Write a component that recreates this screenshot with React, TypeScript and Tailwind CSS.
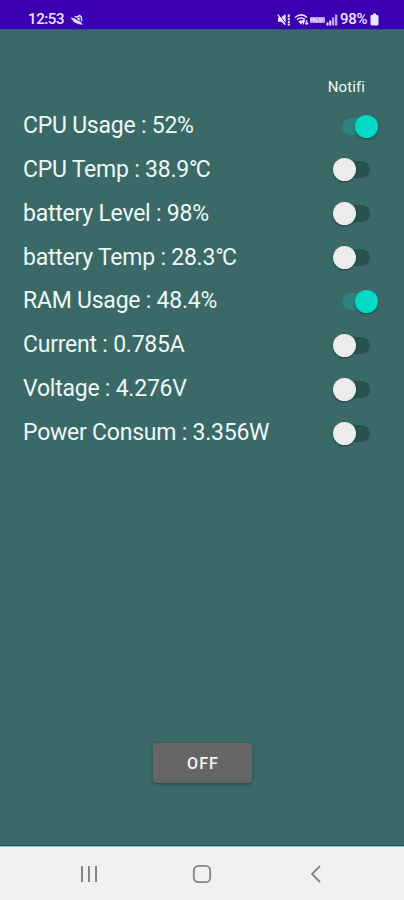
type Metric = { label: string; unit?: string; on?: boolean };

const metrics: Metric[] = [
  { label: "CPU Usage : 52%", on: true },
  { label: "CPU Temp : 38.9", unit: "C" },
  { label: "battery Level : 98%" },
  { label: "battery Temp : 28.3", unit: "C" },
  { label: "RAM Usage : 48.4%", on: true },
  { label: "Current : 0.785A" },
  { label: "Voltage : 4.276V" },
  { label: "Power Consum : 3.356W" },
];

function Switch({ on }: { on?: boolean }) {
  return (
    <span role="switch" aria-checked={!!on} className="flex h-[23px] w-[45px] items-center">
      <span
        className={`ml-[9px] flex h-[17px] w-7 shrink-0 items-center rounded-full ${
          on ? "bg-[#29847b]" : "bg-[#28514f]"
        }`}
      >
        <span
          className={`size-[23px] shrink-0 rounded-full shadow-[0_1px_2px_rgba(0,40,40,0.5)] ${
            on ? "ml-[13.4px] bg-[#03dac5]" : "-ml-[8.6px] bg-[#ececec]"
          }`}
        />
      </span>
    </span>
  );
}

function StatusBar() {
  return (
    <header className="flex h-[30px] items-start justify-between border-b border-[#315580] bg-[#3a00b2] pt-[11px] pr-[25px] pl-7 text-[#ece6ff]">
      <div className="flex items-center">
        <span className="w-[37px] text-[15px] font-medium leading-[17px] tracking-[-0.4px]">12:53</span>
        <svg className="ml-[5px] h-[13px] w-[14px]" viewBox="0 0 14 13" fill="none" stroke="currentColor">
          <path d="M1.2 5 4 8.8 8 10.6l4.2.8-1.6-2.4-3.6-1.6-3-2z" fill="currentColor" strokeWidth=".6" />
          <path d="M4.6 3.6 7 4l2.6-1.6 1.6 1.4.6 4.4" strokeWidth="1.3" />
          <path d="M9 4.2v2.6M7 5.4l3.2 1.6" strokeWidth="1.1" />
        </svg>
      </div>
      <div className="flex items-center">
        <svg className="h-[14px] w-[63px]" viewBox="0 0 63 14" fill="none" stroke="currentColor">
          <path d="M1 4.6h3L8.6 1v11L4 8.8H1z" fill="currentColor" stroke="none" />
          <path d="M1.8 1.2 9 11" stroke="#3a00b2" strokeWidth="1" />
          <path d="M.8 1.6 8 11.5" strokeWidth="1.3" />
          <path d="M11.8 1.5v11" strokeWidth="2" strokeDasharray="2.6 .6" />
          <path d="M18 4.5c4-3.3 8.5-3.3 12 0M20 6.6c2.7-2.2 5.3-2.2 8 0M22 8.8c1.4-1.1 2.8-1.1 4 0" strokeWidth="1.5" />
          <path d="m22 9 2 2.8L26 9z" fill="currentColor" stroke="none" />
          <path d="M26.5 11.5V7.8M25 9l1.5-1.6L28 9M29.7 7v4M28.2 9.8l1.5 1.6 1.5-1.6" strokeWidth="1.1" />
          <rect x="33" y="4" width="15" height="6" rx="1" fill="#b7a3ea" stroke="none" />
          <path d="M34 8.5v-3l1.5 1.5L37 5.5v3M39 5.5v3h2M43 5.5v3M45 5.5v3" stroke="#f1ebff" strokeWidth=".9" />
          <path d="M50.5 9.5v3M53.3 7.5v5" strokeWidth="2" />
          <path d="M56.2 4.5v8M59.2 1.5v11" strokeWidth="2.3" stroke="#b9a4ee" />
        </svg>
        <span className="w-[30px] text-[15px] font-medium leading-[17px] tracking-[-0.3px]">98%</span>
        <svg className="h-[13px] w-[9px]" viewBox="0 0 9 13" fill="currentColor">
          <path d="M3 .5h3V2h1.2Q8.5 2 8.5 3.3v7.8q0 1.4-1.3 1.4H1.8Q.5 12.5.5 11.1V3.3Q.5 2 1.8 2H3z" />
        </svg>
      </div>
    </header>
  );
}

export default function App() {
  return (
    <div className="flex h-[900px] w-[404px] flex-col overflow-hidden bg-[#3a6967] font-['Roboto','Noto_Sans_CJK_JP',sans-serif]">
      <StatusBar />
      <main className="flex flex-1 flex-col pt-[47px] text-[#edf8f7]">
        <div className="mr-[39px] self-end text-[15px] leading-5 tracking-[0.1px]">Notifi</div>
        <ul className="mt-[7.2px]">
          {metrics.map((m) => (
            <li key={m.label} className="flex h-[43.85px] items-center justify-between pr-[26px] pl-[23px]">
              <span className="whitespace-pre text-[23px] leading-7 tracking-[-0.23px]">
                {m.label}
                {m.unit && <span className="tracking-[-1.8px]">°{m.unit}</span>}
              </span>
              <Switch on={m.on} />
            </li>
          ))}
        </ul>
        <button className="mt-auto mb-[63px] h-10 w-[99px] self-center rounded-[3px] bg-[#666666] pt-[2px] pl-[2px] text-[16px] font-medium tracking-[1.1px] text-[#f5f5f5] shadow-[0_1px_3px_rgba(0,0,0,0.35)]">
          OFF
        </button>
      </main>
      <nav className="flex h-[54px] items-center justify-between border-t border-[#9ec4c5] bg-[#f1f1f1] pr-[82px] pl-[80px] text-[#858585] shadow-[0_-1px_0_#164e52]">
        <svg className="h-[18px] w-[18px]" viewBox="0 0 18 18" stroke="currentColor" strokeWidth="2">
          <path d="M2 1v16M9 1v16M16 1v16" />
        </svg>
        <svg className="-ml-[4px] h-[20px] w-[20px]" viewBox="0 0 20 20" fill="none" stroke="currentColor" strokeWidth="1.8">
          <rect x="1.8" y="1.8" width="16.4" height="16.4" rx="4.8" />
        </svg>
        <svg className="h-[18px] w-[12px]" viewBox="0 0 12 18" fill="none" stroke="currentColor" strokeWidth="1.8">
          <path d="M10 1 2 9l8 8" />
        </svg>
      </nav>
    </div>
  );
}
